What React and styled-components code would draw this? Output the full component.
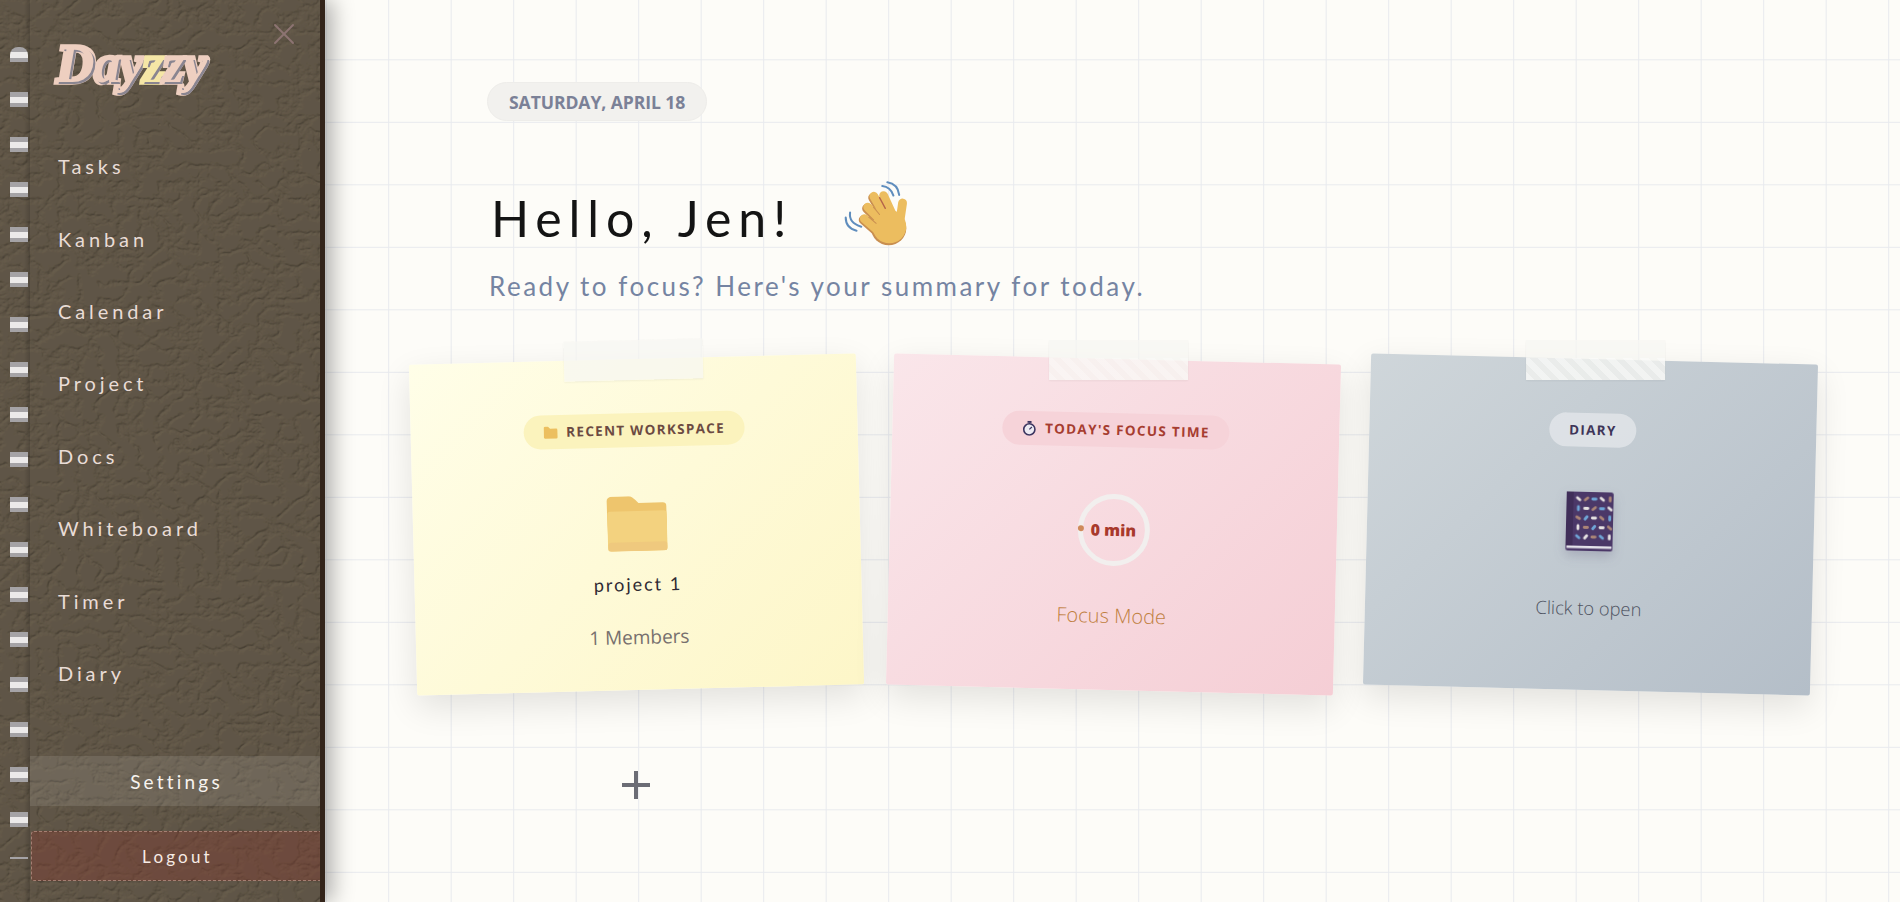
import styled, { createGlobalStyle } from 'styled-components'
import { X } from 'lucide-react'

const handFont = `"Lato", "Open Sans", sans-serif`
const bodyFont = `"Open Sans", "Noto Sans", sans-serif`

const leatherSvg = `<svg xmlns='http://www.w3.org/2000/svg' width='325' height='902'><filter id='l' x='0' y='0' width='100%' height='100%'><feTurbulence type='turbulence' baseFrequency='0.05 0.06' numOctaves='4' seed='8'/><feColorMatrix type='matrix' values='0 0 0 0 0 0 0 0 0 0 0 0 0 0 0 3.2 0 0 0 0'/><feDiffuseLighting surfaceScale='0.75' diffuseConstant='1' lighting-color='#665b4c'><feDistantLight azimuth='235' elevation='60'/></feDiffuseLighting></filter><rect width='325' height='902' filter='url(#l)'/></svg>`

const GlobalStyle = createGlobalStyle`
   html, body {
      margin: 0;
      height: 100%;
      overflow: hidden;
   }
   body {
      background-color: #fdfcf8;
      background-image:
         linear-gradient(#e8eaee 1.4px, transparent 1.4px),
         linear-gradient(90deg, #e8eaee 1.4px, transparent 1.4px);
      background-size: 62.5px 62.5px;
      background-position: 325.7px -3.2px;
   }
`

const Page = styled.div`
   display: flex;
   height: 902px;
`

const Sidebar = styled.aside`
   position: relative;
   box-sizing: border-box;
   flex: 0 0 325px;
   height: 902px;
   display: flex;
   flex-direction: column;
   padding-left: 30px;
   background-color: #5a5044;
   background-image: url("data:image/svg+xml,${encodeURIComponent(leatherSvg)}");
   border-right: 5px solid #33241a;
   box-shadow: 8px 0 20px rgba(0, 0, 0, 0.3);
`

const SpineEdge = styled.div`
   position: absolute;
   left: 24px;
   top: 0;
   bottom: 0;
   width: 6px;
   background: linear-gradient(90deg, transparent, rgba(0, 0, 0, 0.16));
`

const Rings = styled.div`
   position: absolute;
   left: 10px;
   top: 47px;
   width: 18px;
   height: 811.5px;
   border-radius: 8px 8px 0 0;
   background: repeating-linear-gradient(
      180deg,
      #a5a3a6 0,
      #a5a3a6 5px,
      #eceaea 5px,
      #eceaea 11px,
      #a5a3a6 11px,
      #a5a3a6 15px,
      transparent 15px,
      transparent 45px
   );
`

const CloseButton = styled.button`
   position: absolute;
   top: 16px;
   right: 18px;
   padding: 0;
   border: none;
   background: none;
   color: #8d7472;
   display: flex;
`

const Logo = styled.div`
   margin: 34px 0 0 27px;
   height: 62px;
   font-family: "Liberation Serif", serif;
   font-weight: 700;
   font-style: italic;
   font-size: 52px;
   line-height: 62px;
   color: #eecfc0;
   -webkit-text-stroke: 5.5px #eecfc0;
   paint-order: stroke fill;
   text-shadow: 2px 2px 0 #8a8590;
`

const LogoHighlight = styled.span`
   color: #f5e6a6;
   -webkit-text-stroke: 5.5px #f5e6a6;
`

const Nav = styled.nav`
   margin-top: 34px;
   display: flex;
   flex-direction: column;
`

const NavItem = styled.a`
   height: 72.4px;
   padding-left: 28px;
   display: flex;
   align-items: center;
   font-family: ${handFont};
   font-size: 20px;
   letter-spacing: 3.9px;
   color: #e9dcd6;
`

const SettingsButton = styled.div`
   margin-top: 47px;
   padding-left: 3px;
   height: 50px;
   display: flex;
   align-items: center;
   justify-content: center;
   font-family: ${handFont};
   font-size: 19px;
   letter-spacing: 3.2px;
   color: #f7f3ef;
   background: rgba(255, 255, 255, 0.1);
`

const LogoutButton = styled.div`
   box-sizing: border-box;
   margin: 25px 0 0 1px;
   padding-left: 3px;
   height: 50px;
   display: flex;
   align-items: center;
   justify-content: center;
   font-family: ${handFont};
   font-size: 17px;
   letter-spacing: 3.2px;
   color: #f7ebe5;
   background: rgba(140, 52, 42, 0.32);
   border: 1px dashed rgba(240, 200, 185, 0.42);
   border-right: none;
   border-radius: 3px 0 0 3px;
`

const Main = styled.main`
   flex: 1;
   min-width: 0;
   padding: 82px 0 0 162px;
`

const DateChip = styled.div`
   box-sizing: border-box;
   display: inline-flex;
   align-items: center;
   height: 39px;
   padding: 0 21px;
   border-radius: 20px;
   background: #f2f1ee;
   border: 1px solid #eeedea;
   font-family: ${bodyFont};
   font-weight: 700;
   font-size: 17.6px;
   letter-spacing: -0.1px;
   color: #7b8197;
`

const Greeting = styled.div`
   margin: 60px 0 0 4px;
   height: 74px;
   display: flex;
   align-items: center;
`

const Heading = styled.h1`
   margin: 0;
   font-family: ${handFont};
   font-weight: 400;
   font-size: 50px;
   letter-spacing: 6.9px;
   color: #141414;
`

const WaveIcon = styled.svg`
   margin: -8px 0 0 50px;
   width: 66px;
   height: 66px;
`

const Subtitle = styled.p`
   margin: 13.5px 0 0 2px;
   font-family: ${handFont};
   font-size: 26px;
   line-height: 34px;
   letter-spacing: 2.5px;
   color: #7584a2;
`

const CardRow = styled.div`
   display: flex;
   gap: 30px;
   margin: 56px 0 0 -74px;
`

const Card = styled.section`
   position: relative;
   flex: 0 0 447px;
   height: 331px;
   box-sizing: border-box;
   padding-top: 54px;
   display: flex;
   flex-direction: column;
   align-items: center;
   border-radius: 2px;
   transform: rotate(${p => p.$tilt}deg);
   background: linear-gradient(135deg, ${p => p.$from}, ${p => p.$to});
   box-shadow: 0 12px 34px rgba(0, 0, 0, 0.11);
`

const Tape = styled.div`
   position: absolute;
   top: -19px;
   left: 50%;
   width: 139px;
   height: 40px;
   margin-left: -69px;
   transform: rotate(${p => p.$tilt}deg);
   background-color: rgba(246, 246, 242, 0.72);
   background-image: repeating-linear-gradient(
      45deg,
      rgba(255, 255, 255, ${p => p.$stripe}) 0 6px,
      transparent 6px 12px
   );
   background-size: 100% 22px;
   background-position: bottom;
   background-repeat: no-repeat;
   box-shadow: 0 1px 2px rgba(0, 0, 0, 0.05);
`

const Chip = styled.div`
   box-sizing: border-box;
   height: 34px;
   padding: 0 20px;
   display: flex;
   align-items: center;
   gap: 9px;
   border-radius: 17px;
   background: ${p => p.$bg};
   color: ${p => p.$color};
   font-family: ${bodyFont};
   font-weight: 700;
   font-size: 13.5px;
   letter-spacing: 1.3px;
`

const FolderArt = styled.svg`
   margin-top: 49px;
   width: 60px;
   height: 55px;
`

const ProjectName = styled.div`
   margin-top: 20px;
   font-family: ${handFont};
   font-size: 18px;
   line-height: 26px;
   letter-spacing: 2px;
   color: #2f2a33;
`

const Members = styled.div`
   margin-top: 27px;
   font-family: ${bodyFont};
   font-size: 19px;
   line-height: 26px;
   color: #77706e;
`

const TimerRing = styled.div`
   position: relative;
   box-sizing: border-box;
   margin-top: 47px;
   width: 72px;
   height: 72px;
   border: 5px solid #f2efee;
   border-radius: 50%;
   display: flex;
   align-items: center;
   justify-content: center;
   font-family: ${bodyFont};
   font-weight: 800;
   font-size: 16px;
   white-space: nowrap;
   color: #a8392c;
`

const TimerDot = styled.span`
   position: absolute;
   left: -5px;
   top: 27px;
   width: 6px;
   height: 6px;
   border-radius: 50%;
   background: #cf8a5a;
`

const FocusMode = styled.div`
   margin-top: 36px;
   font-family: ${bodyFont};
   font-weight: 300;
   font-size: 20px;
   line-height: 28px;
   color: #c0803f;
`

const BookArt = styled.svg`
   margin: 45px 4px 0 0;
   width: 48px;
   height: 60px;
   filter: drop-shadow(0 5px 6px rgba(60, 50, 90, 0.2));
`

const OpenHint = styled.div`
   margin-top: 43px;
   font-family: ${bodyFont};
   font-weight: 300;
   font-size: 18.3px;
   line-height: 26px;
   color: #4f5462;
`

const AddButton = styled.button`
   display: flex;
   margin: 81px 0 0 135px;
   padding: 0;
   border: none;
   background: none;
   color: #6b6c75;
`

const navLinks = ['Tasks', 'Kanban', 'Calendar', 'Project', 'Docs', 'Whiteboard', 'Timer', 'Diary']

const pillColors = ['#e6e2e2', '#ab8577', '#6fa5d6']
const pillRows = [
   [[0, 40], [1, -40], [2, 0], [0, 40], [1, 90]],
   [[2, 90], [0, 0], [1, -40], [2, 0], [0, 40]],
   [[1, 30], [2, -50], [0, 0], [1, 40], [2, 90]],
   [[0, 90], [1, 0], [2, -50], [0, 0], [1, 40]],
   [[2, 40], [0, -50], [1, 0], [2, 40], [0, 90]],
]

function WaveHand() {
   return (
      <WaveIcon viewBox="70 35 195 195" fill="none" strokeLinecap="round">
         <path d="M186 50Q210 52 219 78M201 39Q232 44 236 76M91 128Q86 158 124 170M78 143Q78 174 110 182" stroke="#5f8dbd" strokeWidth="6" />
         <g stroke="#c98f50" strokeWidth="27" transform="translate(-3 4)">
            <path d="M161 80L196 140M143 112L186 155M133 146L186 192" />
         </g>
         <ellipse cx="205" cy="175" rx="52" ry="50" fill="#c98f50" />
         <g stroke="#ecbd5f" strokeWidth="26">
            <path d="M161 80L196 140M190 78L216 135M143 112L186 155M133 146L186 192M246 100L238 155" />
         </g>
         <ellipse cx="207" cy="170" rx="50" ry="49" fill="#ecbd5f" />
         <path d="M178 84L195 116" stroke="#b5654a" strokeWidth="4" />
         <path d="M160 112L178 134M146 142L168 160" stroke="#c98f50" strokeWidth="3" />
      </WaveIcon>
   )
}

function BookDrawing() {
   return (
      <BookArt viewBox="0 0 48 60">
         <rect x="1" y="0" width="47" height="59" rx="2.5" fill="#4b3868" />
         <rect x="1" y="0" width="7" height="54" fill="#402e59" />
         <rect x="2" y="54" width="45" height="2.5" fill="#e3e1ea" />
         {pillRows.map((row, r) =>
            row.map(([c, angle], i) => (
               <rect
                  key={`${r}-${i}`}
                  x={-3}
                  y={-1.4}
                  width={6}
                  height={2.8}
                  rx={1.4}
                  fill={pillColors[c]}
                  transform={`translate(${13 + i * 7.9} ${7 + r * 9.5}) rotate(${angle})`}
               />
            ))
         )}
      </BookArt>
   )
}

export default function App() {
   return (
      <Page>
         <GlobalStyle />
         <Sidebar>
            <SpineEdge />
            <Rings />
            <CloseButton><X size={36} strokeWidth={1.3} /></CloseButton>
            <Logo>Day<LogoHighlight>z</LogoHighlight>zy</Logo>
            <Nav>
               {navLinks.map(link => <NavItem key={link}>{link}</NavItem>)}
            </Nav>
            <SettingsButton>Settings</SettingsButton>
            <LogoutButton>Logout</LogoutButton>
         </Sidebar>
         <Main>
            <DateChip>SATURDAY, APRIL 18</DateChip>
            <Greeting>
               <Heading>Hello, Jen!</Heading>
               <WaveHand />
            </Greeting>
            <Subtitle>Ready to focus? Here's your summary for today.</Subtitle>
            <CardRow>
               <Card $tilt={-1.45} $from="#fffee8" $to="#fdf6c8">
                  <Tape $tilt={0} $stripe={0} />
                  <Chip $bg="#fbf3bd" $color="#6b4a42">
                     <svg width="14" height="13" viewBox="0 0 14 13">
                        <path d="M0 2a1.5 1.5 0 0 1 1.5-1.5h3l2 2h6A1.5 1.5 0 0 1 14 4v7a1.5 1.5 0 0 1-1.5 1.5h-11A1.5 1.5 0 0 1 0 11z" fill="#ecbf5f" />
                     </svg>
                     RECENT WORKSPACE
                  </Chip>
                  <FolderArt viewBox="0 0 60 55">
                     <path d="M0 5a5 5 0 0 1 5-5h17c3 0 5 2 7 4l3 3h24a4 4 0 0 1 4 4v40a4 4 0 0 1-4 4H5a5 5 0 0 1-4-4z" fill="#eec56d" />
                     <rect x="0.5" y="15" width="59.5" height="40" rx="3" fill="#f3d27f" />
                     <rect x="1" y="46" width="59" height="9" rx="3" fill="#efc97e" />
                  </FolderArt>
                  <ProjectName>project 1</ProjectName>
                  <Members>1 Members</Members>
               </Card>
               <Card $tilt={1.42} $from="#fae6ea" $to="#f5ced5">
                  <Tape $tilt={-1.42} $stripe={0.25} />
                  <Chip $bg="#f6d3d9" $color="#a63d30">
                     <svg width="14" height="15" viewBox="0 0 14 15">
                        <rect x="5" y="0" width="4" height="2" fill="#3c3560" />
                        <circle cx="7" cy="8.5" r="5.6" fill="#eceaf2" stroke="#3c3560" strokeWidth="1.6" />
                        <path d="M7 8.5L9.5 6" stroke="#3c3560" strokeWidth="1.2" />
                     </svg>
                     TODAY'S FOCUS TIME
                  </Chip>
                  <TimerRing>
                     <TimerDot />
                     0 min
                  </TimerRing>
                  <FocusMode>Focus Mode</FocusMode>
               </Card>
               <Card $tilt={1.42} $from="#cfd6da" $to="#b4bec8">
                  <Tape $tilt={-1.42} $stripe={0.4} />
                  <Chip $bg="rgba(236, 238, 240, 0.62)" $color="#3e3558">DIARY</Chip>
                  <BookDrawing />
                  <OpenHint>Click to open</OpenHint>
               </Card>
            </CardRow>
            <AddButton>
               <svg width="28" height="28" viewBox="0 0 28 28" fill="currentColor">
                  <path d="M12 0h4v12h12v4H16v12h-4V16H0v-4h12z" />
               </svg>
            </AddButton>
         </Main>
      </Page>
   )
}
